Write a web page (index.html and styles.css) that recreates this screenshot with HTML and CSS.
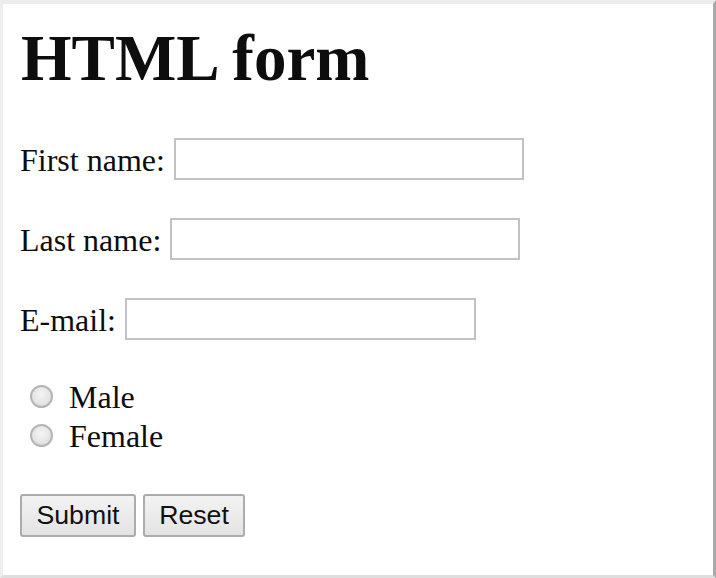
FILE: index.html
```html
<!DOCTYPE html>
<html>
<head>
<meta charset="utf-8">
<link rel="stylesheet" href="styles.css">
</head>
<body>
<div class="frame">
  <h1 class="title">HTML form</h1>
  <form class="form">
    <div class="row"><label class="label">First name:</label><input class="field field-first" type="text"></div>
    <div class="row"><label class="label">Last name:</label><input class="field field-last" type="text"></div>
    <div class="row"><label class="label">E-mail:</label><input class="field field-email" type="text"></div>
    <div class="radios">
      <label class="radio-row"><input class="radio" type="radio" name="g"><span class="radio-text">Male</span></label>
      <label class="radio-row"><input class="radio" type="radio" name="g"><span class="radio-text">Female</span></label>
    </div>
    <div class="buttons">
      <button type="button" class="btn btn-submit">Submit</button>
      <button type="button" class="btn btn-reset">Reset</button>
    </div>
  </form>
</div>
</body>
</html>
```

FILE: styles.css
```css
html, body {
  margin: 0;
  padding: 0;
  background: #ffffff;
}

.frame {
  box-sizing: border-box;
  width: 716px;
  height: 578px;
  border-top: 4px solid #ececec;
  border-left: 3px solid #eeeeee;
  border-right: 3px solid #a9a9a9;
  border-bottom: 3px solid #dedede;
  padding: 22px 0 0 17px;
  font-family: "Liberation Serif", "Times New Roman", serif;
  color: #0d0d0d;
  display: flex;
  flex-direction: column;
}

.title {
  margin: 0;
  font-size: 65px;
  line-height: 64px;
  font-weight: bold;
  padding-left: 1px;
}

.form {
  display: flex;
  flex-direction: column;
  margin-top: 48px;
}

.row {
  display: flex;
  align-items: center;
  gap: 9px;
  height: 42px;
  margin-bottom: 38px;
}

.label {
  font-size: 32px;
  line-height: 32px;
  margin-top: 2px;
}

.field {
  box-sizing: border-box;
  height: 42px;
  border: 2px solid #c2c2c2;
  background: #ffffff;
  margin: 0;
  padding: 0;
}

.field-first { width: 350px; }
.field-last { width: 350px; }
.field-email { width: 351px; }

.radios {
  display: flex;
  flex-direction: column;
}

.radio-row {
  display: flex;
  align-items: center;
  height: 39px;
  font-size: 32px;
  line-height: 39px;
}

.radio {
  appearance: none;
  -webkit-appearance: none;
  box-sizing: border-box;
  width: 23px;
  height: 23px;
  margin: -3px 16px 0 10px;
  border-radius: 50%;
  border: 2px solid #b5b5b5;
  background: radial-gradient(circle at 50% 40%, #f4f4f4 0%, #e6e6e6 55%, #d4d4d4 100%);
}

.buttons {
  display: flex;
  gap: 7px;
  margin-top: 38px;
}

.btn {
  box-sizing: border-box;
  height: 43px;
  border: 2px solid #acacac;
  border-radius: 3px;
  background: linear-gradient(#f3f3f3, #e3e3e3);
  font-family: "Liberation Sans", Arial, sans-serif;
  font-size: 26.7px;
  color: #111111;
  padding: 0;
  margin: 0;
}

.btn-submit { width: 116px; }
.btn-reset { width: 102px; }
```
